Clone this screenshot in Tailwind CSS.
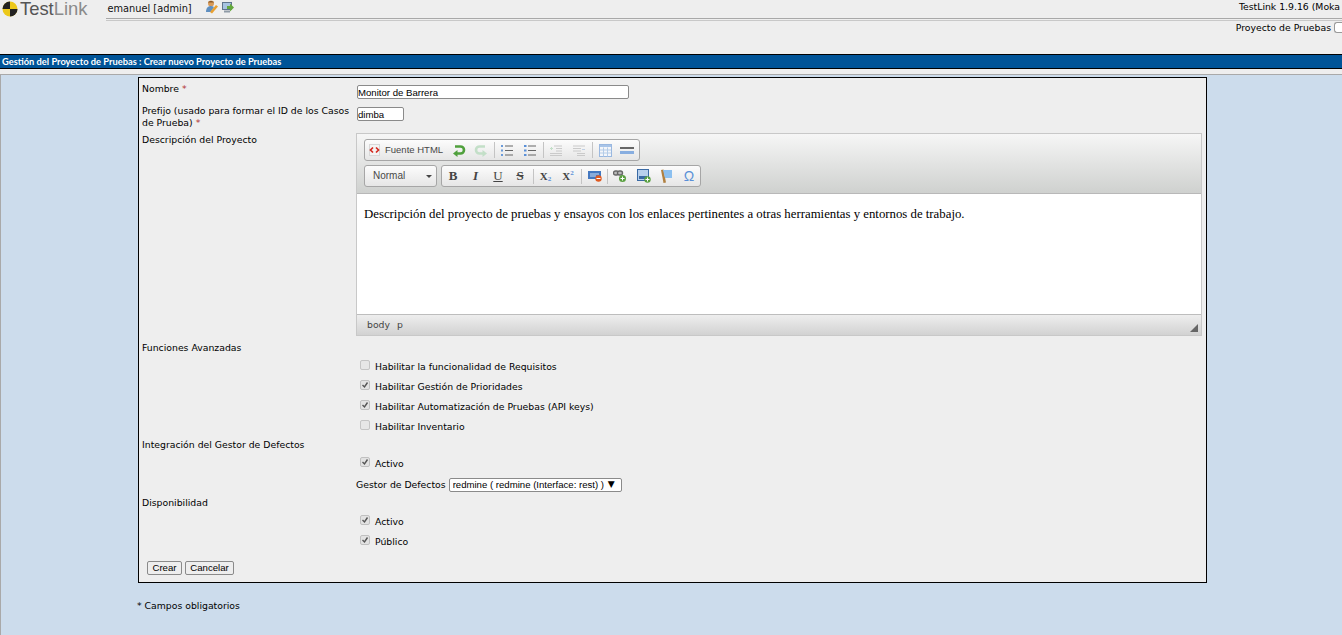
<!DOCTYPE html>
<html lang="es">
<head>
<meta charset="utf-8">
<title>TestLink</title>
<script src="https://cdn.jsdelivr.net/npm/@tailwindcss/browser@4"></script>
</head>
<body class="h-[635px] w-[1342px] overflow-hidden bg-[#ccdcec] font-['DejaVu_Sans',sans-serif] text-[9.3px] leading-[12px] text-black">
<header class="relative h-[54px] bg-[#eeeeee]">
  <div class="flex h-[18px] items-start">
    <svg class="ml-[2px] mt-[1px] h-[16px] w-[16px]" viewBox="0 0 16 16"><circle cx="8" cy="8" r="7.5" fill="#ecc81a"/><path d="M8 8V.5A7.5 7.5 0 0 0 .5 8Z" fill="#222"/><path d="M8 8v7.5A7.5 7.5 0 0 0 15.500 8Z" fill="#222"/></svg>
    <div class="ml-[2px] font-['Liberation_Sans',sans-serif] text-[18.400px] leading-[18px] text-[#8a8a8a]"><span class="text-[#555]">Test</span>Link</div>
    <div class="ml-[20px] mt-[3px] text-[9.800px] text-[#111]">emanuel [admin]</div>
    <div class="ml-[13px] flex gap-[3px]">
      <svg class="h-[14px] w-[13px]" viewBox="0 0 13 14"><circle cx="6" cy="3.500" r="3" fill="#d89a58"/><path d="M3 2.500c1-2 5-2 6 0Z" fill="#8a5a2a"/><path d="M1 12c0-4 2-6 5-6 1 0 2 .5 3 1l-3 5Z" fill="#5f8fc0"/><path d="m5 12 6-7 2 1.500-6 7Z" fill="#e8a030"/></svg>
      <svg class="h-[14px] w-[13px]" viewBox="0 0 13 14"><rect x="1.500" y="2.500" width="9" height="7" fill="#a8c4e0" stroke="#60758c"/><rect x="3" y="10.500" width="6" height="2" fill="#8e9aa6"/><path d="M6 6h3V3.500L13 7.500l-4 4V9H6Z" fill="#64a83c"/></svg>
    </div>
    <div class="ml-auto mr-[2px] mt-[1px] whitespace-nowrap">TestLink 1.9.16 (Moka</div>
  </div>
  <div class="ml-[106px] h-[3px] border-y border-[#a8a8a8] border-b-[#c8c8c8] bg-[#eeeeee]"></div>
  <div class="mt-[1px] flex justify-end">
    <span>Proyecto de Pruebas</span>
    <span class="ml-[3px] h-[11px] w-[8px] rounded-l-[3px] border border-r-0 border-[#999] bg-white"></span>
  </div>
</header>
<div class="flex h-[15px] items-center border-y border-black bg-[#005498] pl-[2px] font-['Lato',sans-serif] text-[9.300px] font-bold text-white">Gestión del Proyecto de Pruebas : Crear nuevo Proyecto de Pruebas</div>
<div class="h-[5px] bg-[#eeeeee]"></div>
<main class="h-[561px] border-t border-l border-[#a9a9a9] pl-[137px] pt-[2px]">
  <form class="flex h-[506px] w-[1069px] flex-col border border-black bg-[#eeeeee] pl-[3px]">
    <div class="flex h-[26px] pt-[4px]">
      <div class="w-[214px] pt-[1px]">Nombre <span class="text-[#b03030]">*</span></div>
      <input value="Monitor de Barrera" class="mt-[3px] ml-[1px] h-[14px] w-[272px] rounded-[2px] border border-[#8a8a8a] bg-white px-0 font-['Liberation_Sans',sans-serif] text-[9.600px]">
    </div>
    <div class="flex h-[29px]">
      <div class="w-[214px] pt-[1px]">Prefijo (usado para formar el ID de los Casos de Prueba) <span class="text-[#b03030]">*</span></div>
      <input value="dimba" class="mt-[3px] ml-[1px] h-[14px] w-[47px] rounded-[2px] border border-[#8a8a8a] bg-white px-0 font-['Liberation_Sans',sans-serif] text-[9.600px]">
    </div>
    <div class="flex h-[203px]">
      <div class="w-[214px] pt-[1px]">Descripción del Proyecto</div>
      <div class="flex w-[846px] flex-col border border-[#c8c8c8] bg-white">
        <div class="flex h-[60px] flex-col gap-[4px] border-b border-[#b8b8b8] bg-gradient-to-b from-[#f6f6f6] to-[#cfd1cf] pl-[7px] pt-[5px] font-['Liberation_Sans',sans-serif] text-[#444]">
          <div class="flex h-[22px] w-[276px] items-center rounded-[3px] border border-[#a6a6a6] bg-gradient-to-b from-[#fcfcfc] to-[#e6e6e6]">
            <svg class="ml-[3px] h-[14px] w-[13px]" viewBox="0 0 13 14"><rect x="1.500" y="1.500" width="10" height="11" fill="#f4f4f4" stroke="#d8d8d8"/><path d="M5 4.500 2.500 7 5 9.500M8 4.500 10.500 7 8 9.500" fill="none" stroke="#d42a20" stroke-width="1.700"/></svg>
            <span class="ml-[4px] w-[59px] whitespace-nowrap text-[9.500px] text-[#474747]">Fuente HTML</span>
            <span class="ml-[4px] flex w-[22px] justify-center"><svg class="h-[13px] w-[14px]" viewBox="0 0 14 13"><path d="M3 2.500h5.500a3.500 3.500 0 0 1 0 7H3" fill="none" stroke="#4fa03c" stroke-width="2.600"/><path d="M5.500 6 1 9.500l4.500 3.500Z" fill="#4fa03c"/></svg></span>
            <span class="flex w-[22px] justify-center"><svg class="h-[13px] w-[14px]" viewBox="0 0 14 13"><path d="M11 2.500H5.500a3.500 3.500 0 0 0 0 7H11" fill="none" stroke="#c3dfc8" stroke-width="2.600"/><path d="M8.500 6 13 9.500 8.500 13Z" fill="#c3dfc8"/></svg></span>
            <span class="ml-[2px] mr-[1px] h-[16px] w-px bg-[#c4c4c4]"></span>
            <span class="flex w-[22px] justify-center"><svg class="h-[13px] w-[12px]" viewBox="0 0 12 13"><path d="M0 2h2M0 6.500h2M0 11h2" stroke="#6a9ad8" stroke-width="2"/><path d="M4 2h8M4 6.500h8M4 11h8" stroke="#666"/></svg></span>
            <span class="flex w-[23px] justify-center"><svg class="h-[13px] w-[12px]" viewBox="0 0 12 13"><path d="M0 2h2.500M0 6.500h2.500M0 11h2.500" stroke="#5a90d8" stroke-width="2"/><path d="M4 2h8M4 6.500h8M4 11h8" stroke="#666"/></svg></span>
            <span class="ml-[2px] mr-[1px] h-[16px] w-px bg-[#c4c4c4]"></span>
            <span class="flex w-[22px] justify-center"><svg class="h-[11px] w-[12px]" viewBox="0 0 12 11"><path d="M4 1h8M6 3.500h6M6 6h6M0 8.500h12M0 10.500h12" stroke="#cacaca"/><path d="M0 3.500h3M1.500 2v3" stroke="#c3dfc8"/></svg></span>
            <span class="flex w-[23px] justify-center"><svg class="h-[11px] w-[12px]" viewBox="0 0 12 11"><path d="M0 1h12M0 3.500h8M0 6h8M4 8.500h8M4 10.500h8" stroke="#cacaca"/><path d="M9 4.500h3" stroke="#bfcfe4"/></svg></span>
            <span class="ml-[2px] mr-[1px] h-[16px] w-px bg-[#c4c4c4]"></span>
            <span class="flex w-[22px] justify-center"><svg class="h-[13px] w-[13px]" viewBox="0 0 13 13"><rect x=".5" y=".5" width="12" height="12" fill="#f4f6fa" stroke="#9ab8e0"/><rect x="1" y="1" width="11" height="2" fill="#a8c4e8"/><path d="M1 6h11M1 9h11M4.500 3.500v9M8.500 3.500v9" stroke="#b4cce8"/></svg></span>
            <span class="flex w-[22px] justify-center"><svg class="h-[9px] w-[14px]" viewBox="0 0 14 9"><rect y="1" width="14" height="2" fill="#666"/><rect y="5" width="14" height="3" fill="#88aee0"/></svg></span>
          </div>
          <div class="flex">
            <div class="flex h-[22px] w-[73px] items-center rounded-[3px] border border-[#a6a6a6] bg-gradient-to-b from-[#fcfcfc] to-[#e6e6e6] pl-[8px] text-[10px] text-[#484848]">Normal<span class="ml-auto mr-[4px] border-x-[3px] border-t-[3px] border-x-transparent border-t-[#444]"></span></div>
            <div class="ml-[4px] flex h-[22px] w-[260px] items-center rounded-[3px] border border-[#a6a6a6] bg-gradient-to-b from-[#fcfcfc] to-[#e6e6e6] font-['Liberation_Serif',serif] text-[#444]">
              <span class="flex w-[22px] justify-center text-[13px] font-bold">B</span>
              <span class="flex w-[23px] justify-center text-[13px] font-bold italic">I</span>
              <span class="flex w-[22px] justify-center text-[13px] underline">U</span>
              <span class="flex w-[22px] justify-center text-[13px] font-bold line-through">S</span>
              <span class="ml-[2px] h-[15px] w-px bg-[#c4c4c4]"></span>
              <span class="flex w-[23px] items-start justify-center text-[11px] font-bold">X<span class="mt-[5px] text-[7px] leading-[8px] text-[#5a90d8]">2</span></span>
              <span class="flex w-[22px] items-start justify-center text-[11px] font-bold">X<span class="-mt-[1px] text-[7px] leading-[8px] text-[#5a90d8]">2</span></span>
              <span class="ml-[2px] h-[15px] w-px bg-[#c4c4c4]"></span>
              <span class="flex w-[25px] justify-center"><svg class="h-[12px] w-[14px]" viewBox="0 0 14 12"><rect y="1" width="13" height="8" fill="#4478c0"/><path d="M2 4h9M2 6h6" stroke="#cfe0f4"/><circle cx="10.500" cy="8.500" r="3.200" fill="#e05a20"/><path d="M8.500 8.500h4" stroke="#fff"/></svg></span>
              <span class="h-[15px] w-px bg-[#c4c4c4]"></span>
              <span class="flex w-[24px] justify-center"><svg class="h-[13px] w-[14px]" viewBox="0 0 14 13"><rect x=".5" y="1" width="5" height="4" rx="2" fill="#bbb" stroke="#666" stroke-width="1.400"/><rect x="4.500" y="1" width="5" height="4" rx="2" fill="#bbb" stroke="#666" stroke-width="1.400"/><circle cx="9.500" cy="8.500" r="3.500" fill="#5aa040"/><path d="M7.500 8.500h4M9.500 6.500v4" stroke="#fff"/></svg></span>
              <span class="flex w-[23px] justify-center"><svg class="h-[14px] w-[14px]" viewBox="0 0 14 14"><rect x=".5" y=".5" width="11" height="11" fill="#b8d0ec" stroke="#3a6aa4"/><rect x="2" y="7" width="8" height="3" fill="#3a6aa4"/><circle cx="10.500" cy="10.500" r="3.200" fill="#5aa040"/><path d="M8.500 10.500h4M10.500 8.500v4" stroke="#fff"/></svg></span>
              <span class="flex w-[23px] justify-center"><svg class="h-[14px] w-[13px]" viewBox="0 0 13 14"><path d="M1 1l2.500-.5 2.500 13-2.500.5Z" fill="#b08040"/><path d="M3 1h9v8H5Z" fill="#8cc0f0"/></svg></span>
              <span class="flex w-[22px] justify-center font-['Liberation_Sans',sans-serif] text-[14px] text-[#5a90d8]">Ω</span>
            </div>
          </div>
        </div>
        <div class="h-[120px] pl-[7px] pt-[13px] font-['Liberation_Serif',serif] text-[12.800px] leading-[15px] text-black">Descripción del proyecto de pruebas y ensayos con los enlaces pertinentes a otras herramientas y entornos de trabajo.</div>
        <div class="relative flex h-[21px] flex-1 items-center gap-[7px] border-t border-[#bdbdbd] bg-gradient-to-b from-[#eeeeee] to-[#d2d2d2] pb-[1px] pl-[10px] text-[#444]">
          <span>body</span><span>p</span>
          <span class="absolute bottom-[3px] right-[3px] h-0 w-0 border-b-[8px] border-l-[8px] border-b-[#666] border-l-transparent"></span>
        </div>
      </div>
    </div>
    <div class="h-[20px] pt-[6px]">Funciones Avanzadas</div>
    <div class="ml-[218px] flex h-[20px] items-start"><span class="mt-[4px] h-[10px] w-[10px] rounded-[2px] border border-[#c4c4c4] bg-[#e6e6e6]"></span><span class="ml-[5px] mt-[5px]">Habilitar la funcionalidad de Requisitos</span></div>
    <div class="ml-[218px] flex h-[20px] items-start"><svg class="mt-[4px] h-[10px] w-[10px]" viewBox="0 0 10 10"><rect x=".5" y=".5" width="9" height="9" rx="1.500" fill="#e2e2e2" stroke="#c0c0c0"/><path d="m2.500 5 2 2 3-4.500" fill="none" stroke="#555" stroke-width="1.400"/></svg><span class="ml-[5px] mt-[5px]">Habilitar Gestión de Prioridades</span></div>
    <div class="ml-[218px] flex h-[20px] items-start"><svg class="mt-[4px] h-[10px] w-[10px]" viewBox="0 0 10 10"><rect x=".5" y=".5" width="9" height="9" rx="1.500" fill="#e2e2e2" stroke="#c0c0c0"/><path d="m2.500 5 2 2 3-4.500" fill="none" stroke="#555" stroke-width="1.400"/></svg><span class="ml-[5px] mt-[5px]">Habilitar Automatización de Pruebas (API keys)</span></div>
    <div class="ml-[218px] flex h-[20px] items-start"><span class="mt-[4px] h-[10px] w-[10px] rounded-[2px] border border-[#c4c4c4] bg-[#e6e6e6]"></span><span class="ml-[5px] mt-[5px]">Habilitar Inventario</span></div>
    <div class="h-[18px] pt-[3px]">Integración del Gestor de Defectos</div>
    <div class="ml-[218px] flex h-[20px] items-start"><svg class="mt-[3px] h-[10px] w-[10px]" viewBox="0 0 10 10"><rect x=".5" y=".5" width="9" height="9" rx="1.500" fill="#e2e2e2" stroke="#c0c0c0"/><path d="m2.500 5 2 2 3-4.500" fill="none" stroke="#555" stroke-width="1.400"/></svg><span class="ml-[5px] mt-[4px]">Activo</span></div>
    <div class="ml-[214px] flex h-[20px] items-start"><span class="mt-[5px]">Gestor de Defectos</span><select class="ml-[3px] mt-[4px] h-[14px] w-[173px] appearance-none rounded-[2px] border border-[#8a8a8a] bg-white pl-[3px] font-['Liberation_Sans',sans-serif] text-[9.600px] leading-[12px]"><option>redmine ( redmine (Interface: rest) )</option></select><span class="-ml-[14px] mt-[4px] text-[9px]">▼</span></div>
    <div class="h-[18px] pt-[3px]">Disponibilidad</div>
    <div class="ml-[218px] flex h-[20px] items-start"><svg class="mt-[3px] h-[10px] w-[10px]" viewBox="0 0 10 10"><rect x=".5" y=".5" width="9" height="9" rx="1.500" fill="#e2e2e2" stroke="#c0c0c0"/><path d="m2.500 5 2 2 3-4.500" fill="none" stroke="#555" stroke-width="1.400"/></svg><span class="ml-[5px] mt-[4px]">Activo</span></div>
    <div class="ml-[218px] flex h-[20px] items-start"><svg class="mt-[3px] h-[10px] w-[10px]" viewBox="0 0 10 10"><rect x=".5" y=".5" width="9" height="9" rx="1.500" fill="#e2e2e2" stroke="#c0c0c0"/><path d="m2.500 5 2 2 3-4.500" fill="none" stroke="#555" stroke-width="1.400"/></svg><span class="ml-[5px] mt-[4px]">Público</span></div>
    <div class="ml-[5px] mt-[9px] flex gap-[3px] font-['Liberation_Sans',sans-serif] text-[9.600px]">
      <button type="button" class="h-[14px] w-[35px] rounded-[2px] border border-[#8a8a8a] bg-[#eeeeee] leading-[12px]">Crear</button>
      <button type="button" class="h-[14px] w-[49px] rounded-[2px] border border-[#8a8a8a] bg-[#eeeeee] leading-[12px]">Cancelar</button>
    </div>
  </form>
  <p class="mt-[17px] -ml-[1px]">* Campos obligatorios</p>
</main>
</body>
</html>
